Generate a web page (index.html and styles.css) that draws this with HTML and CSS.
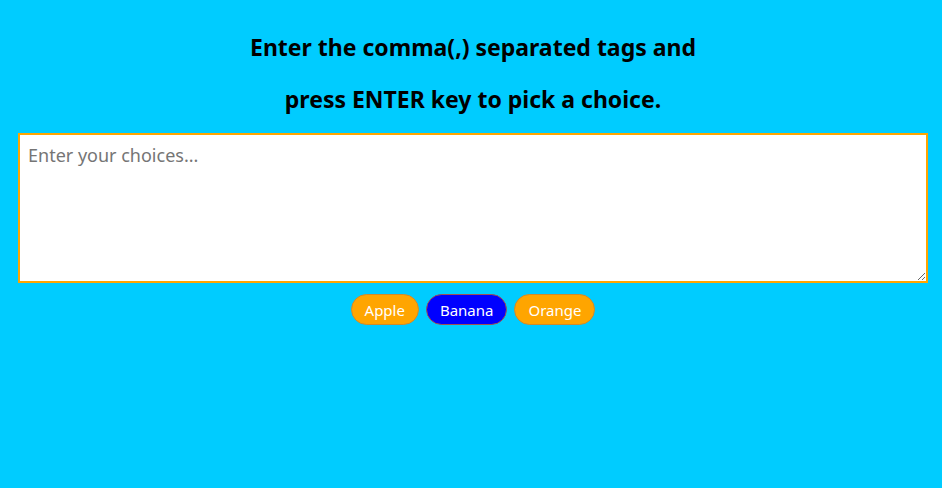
FILE: index.html
```html
<!DOCTYPE html>
<html>
<head>
<meta charset="utf-8">
<link rel="stylesheet" href="styles.css">
</head>
<body>
<div class="container">
  <h2 class="title">Enter the comma(,) separated tags and</h2>
  <h2 class="title">press ENTER key to pick a choice.</h2>
  <textarea class="choices" placeholder="Enter your choices..."></textarea>
  <div class="tags">
    <span class="tag">Apple</span>
    <span class="tag highlight">Banana</span>
    <span class="tag">Orange</span>
  </div>
</div>
</body>
</html>
```
FILE: styles.css
```css
html, body {
  margin: 0;
  padding: 0;
  background: #00ccff;
  height: 100%;
}
body {
  font-family: "Noto Sans", "Open Sans", sans-serif;
}
.container {
  padding: 11px 14px 0 18px;
  display: flex;
  flex-direction: column;
  align-items: center;
}
.title {
  font-size: 23px;
  font-weight: bold;
  line-height: 32px;
  margin: 20px 0 0 0;
  color: #000;
  text-align: center;
}
.title + .title {
  margin-top: 20px;
}
.choices {
  margin-top: 18px;
  box-sizing: border-box;
  width: 910px;
  height: 150px;
  border: 2px solid #ffa500;
  padding: 8px 8px;
  font-family: "Noto Sans", "Open Sans", sans-serif;
  font-size: 18px;
  background: #fff;
  outline: none;
}
.choices::placeholder {
  color: #757575;
}
.tags {
  margin-top: 11px;
  display: flex;
  gap: 7px;
  justify-content: center;
}
.tag {
  box-sizing: border-box;
  height: 31px;
  padding: 0 13px;
  display: flex;
  align-items: center;
  background: #ffa500;
  color: #fff;
  border: 1px solid #d08a2a;
  border-radius: 16px;
  font-size: 15px;
}
.tag.highlight {
  background: #0000ff;
  border-color: #a05050;
}
```
